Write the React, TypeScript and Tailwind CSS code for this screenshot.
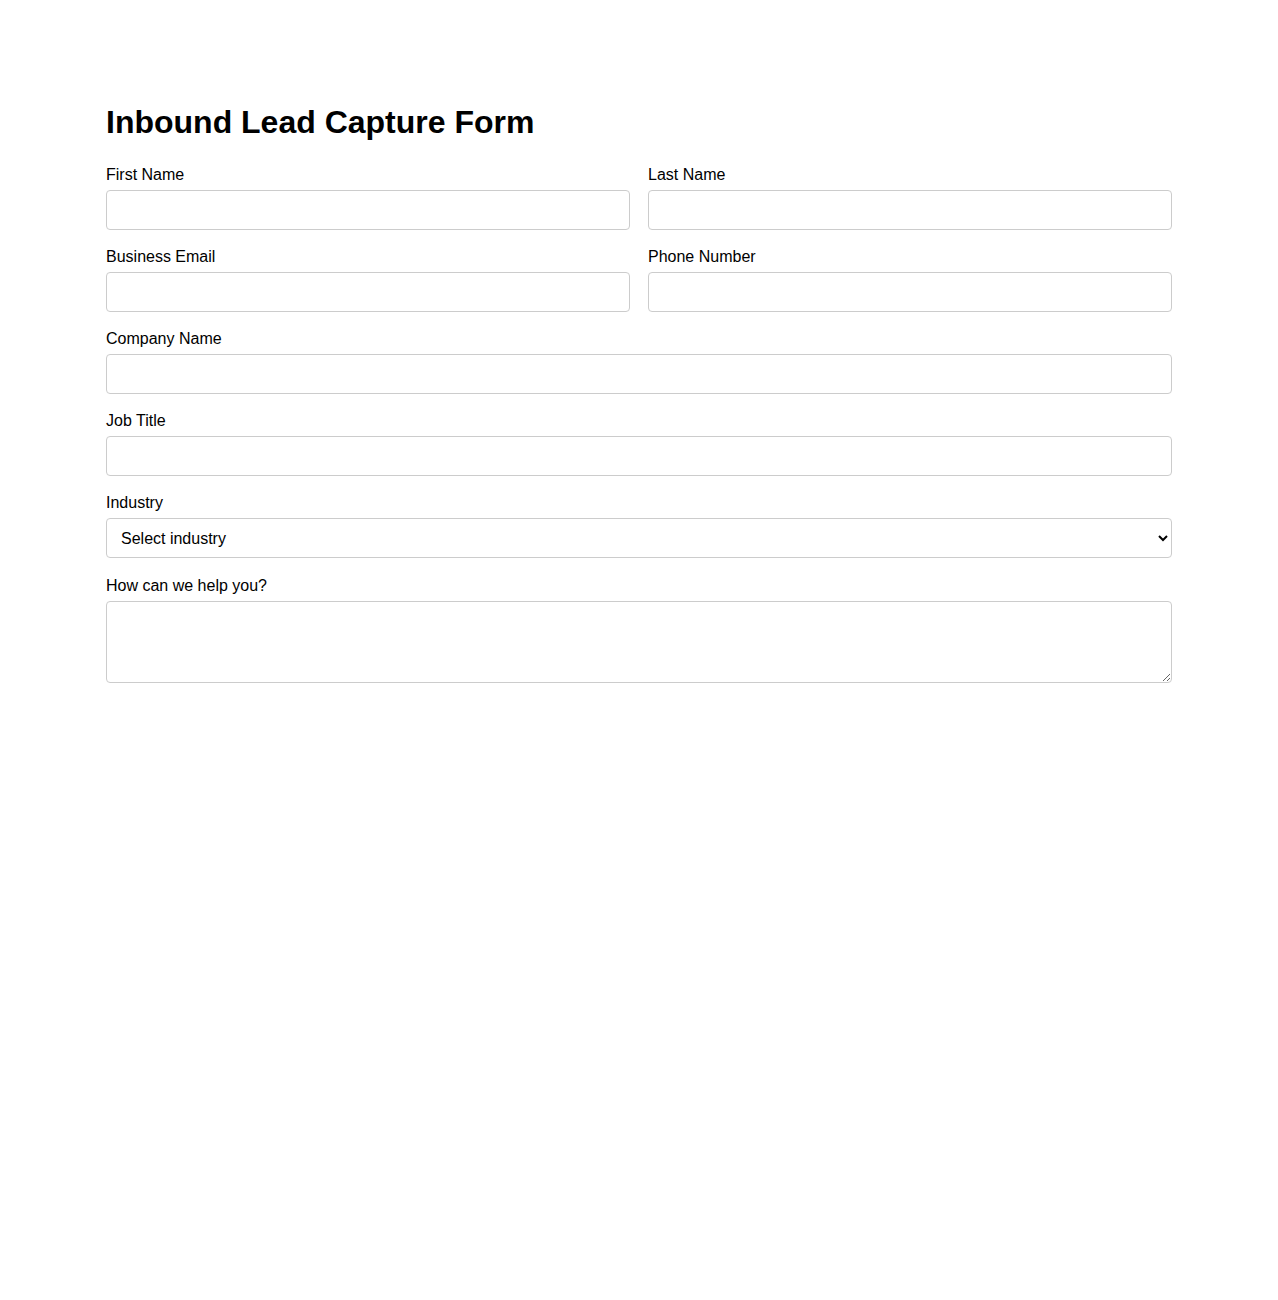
const inputClass =
  "block w-full h-10 rounded border border-[#cccccc] bg-white px-[10px] text-base text-black outline-none";

const labelClass = "mb-[6px] block leading-[19px]";

function Field({ label, id, type = "text" }: { label: string; id: string; type?: string }) {
  return (
    <div className="mb-[17px]">
      <label htmlFor={id} className={labelClass}>
        {label}
      </label>
      <input id={id} name={id} type={type} className={inputClass} />
    </div>
  );
}

export default function App() {
  return (
    <div className="min-h-screen bg-white font-['Liberation_Sans',Arial,sans-serif] text-base text-black">
      <form className="mx-auto w-[1066px] pt-[104px]">
        <h1 className="mb-[24px] text-[32px] font-bold leading-[37px]">Inbound Lead Capture Form</h1>

        <div className="grid grid-cols-2 gap-x-[18px]">
          <Field label="First Name" id="firstName" />
          <Field label="Last Name" id="lastName" />
          <Field label="Business Email" id="email" type="email" />
          <Field label="Phone Number" id="phone" type="tel" />
        </div>

        <Field label="Company Name" id="company" />
        <Field label="Job Title" id="jobTitle" />

        <div className="mb-[18px]">
          <label htmlFor="industry" className={labelClass}>
            Industry
          </label>
          <select id="industry" name="industry" defaultValue="" className={inputClass}>
            <option value="">Select industry</option>
            <option value="saas">Software / SaaS</option>
            <option value="finance">Financial Services</option>
            <option value="health">Healthcare</option>
            <option value="retail">Retail</option>
            <option value="other">Other</option>
          </select>
        </div>

        <div className="mb-4">
          <label htmlFor="message" className={labelClass}>
            How can we help you?
          </label>
          <textarea
            id="message"
            name="message"
            rows={3}
            className="block h-[82px] w-full rounded border border-[#cccccc] bg-white p-[10px] text-base text-black outline-none"
          />
        </div>
      </form>
    </div>
  );
}
